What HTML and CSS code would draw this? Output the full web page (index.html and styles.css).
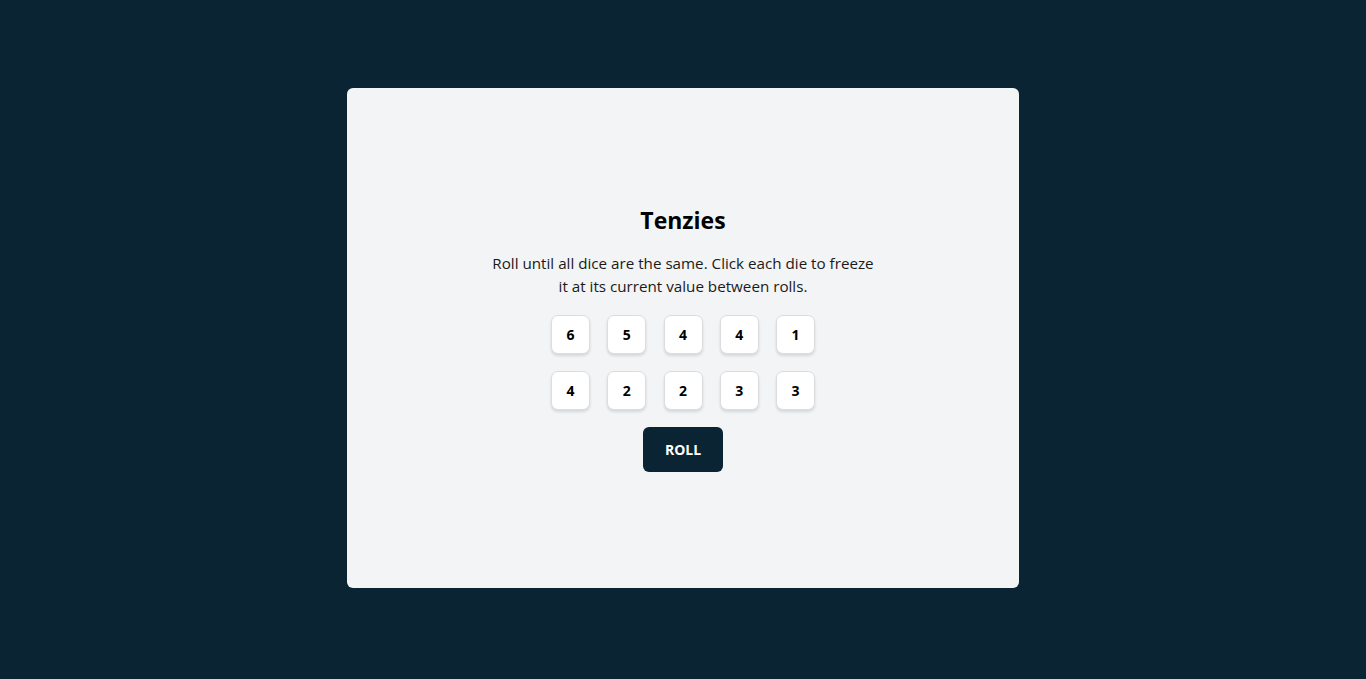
FILE: index.html
```html
<!DOCTYPE html>
<html lang="en">
<head>
<meta charset="utf-8">
<title>Tenzies</title>
<link rel="stylesheet" href="styles.css">
</head>
<body>
<main class="card">
  <h1 class="title">Tenzies</h1>
  <p class="instructions">Roll until all dice are the same. Click each die to freeze it at its current value between rolls.</p>
  <div class="dice">
    <button class="die">6</button>
    <button class="die">5</button>
    <button class="die">4</button>
    <button class="die">4</button>
    <button class="die">1</button>
    <button class="die">4</button>
    <button class="die">2</button>
    <button class="die">2</button>
    <button class="die">3</button>
    <button class="die">3</button>
  </div>
  <button class="roll">ROLL</button>
</main>
</body>
</html>
```
FILE: styles.css
```css
html, body {
  margin: 0;
  padding: 0;
  height: 100%;
}
body {
  background: #0b2434;
  font-family: "Open Sans", "Noto Sans", sans-serif;
  display: flex;
  justify-content: center;
  align-items: flex-start;
  padding-top: 88px;
  box-sizing: border-box;
}
.card {
  width: 672px;
  height: 500px;
  background: #f3f4f6;
  border-radius: 6px;
  display: flex;
  flex-direction: column;
  align-items: center;
  justify-content: center;
  box-sizing: border-box;
  padding-top: 4px;
}
.title {
  margin: 0;
  font-size: 23px;
  font-weight: 700;
  color: #000;
  line-height: 24px;
}
.instructions {
  margin: 20px 0 0;
  width: 388px;
  text-align: center;
  font-size: 15.2px;
  line-height: 23px;
  color: #1a1a1a;
}
.dice {
  margin-top: 17px;
  display: grid;
  grid-template-columns: repeat(5, 39px);
  column-gap: 17.25px;
  row-gap: 17px;
}
.die {
  width: 39px;
  height: 39px;
  border: 1px solid #dcdde0;
  border-radius: 7px;
  background: #fff;
  box-shadow: 0 2px 3px rgba(0,0,0,0.12);
  font-family: inherit;
  font-weight: 700;
  font-size: 14px;
  color: #000;
  padding: 0;
}
.roll {
  margin-top: 17px;
  width: 80px;
  height: 45px;
  border: none;
  border-radius: 6px;
  background: #0b2434;
  color: #fff;
  font-family: inherit;
  font-weight: 700;
  font-size: 14px;
  padding: 0;
}
```
